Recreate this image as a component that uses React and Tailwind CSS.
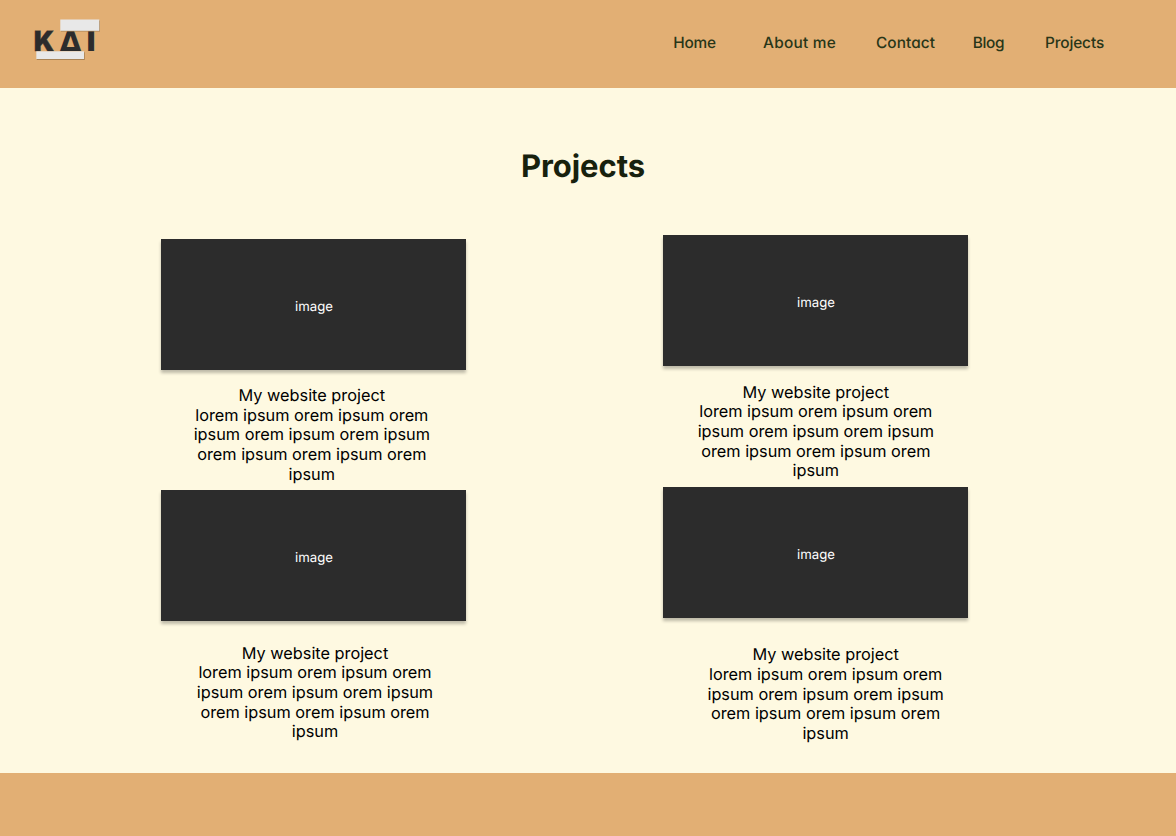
import React from "react";

const links = [
  { label: "Home", box: "w-[44px] ml-[672.5px]", spacing: "tracking-[-0.2px]" },
  { label: "About me", box: "w-[74px] ml-[46px]", spacing: "tracking-[0.25px]" },
  { label: "Contact", box: "w-[60px] ml-[39px]", spacing: "tracking-[0.05px]" },
  { label: "Blog", box: "w-[32px] ml-[37px]", spacing: "tracking-[-0.3px]" },
  { label: "Projects", box: "w-[60px] ml-[40px]", spacing: "tracking-[-0.1px]" },
];

function Logo() {
  return (
    <svg
      className="absolute left-[30px] top-[14px] h-[50px] w-[76px]"
      viewBox="30 14 76 50"
      role="img"
      aria-label="KAT"
    >
      <g fill="#2c2c2c" fontFamily="Inter, sans-serif" fontWeight="900" fontSize="28">
        <text x="33.8" y="51.3" textLength="20.5" lengthAdjust="spacingAndGlyphs" stroke="#2c2c2c" strokeWidth="0.4">K</text>
        <text x="59.3" y="51" fontWeight="800" textLength="22.5" lengthAdjust="spacingAndGlyphs">Δ</text>
        <text x="86.7" y="51" textLength="8.6" lengthAdjust="spacingAndGlyphs">I</text>
      </g>
      <rect x="61" y="20.5" width="39" height="11" fill="#a98355" />
      <rect x="60.3" y="19.5" width="39" height="11.3" fill="#e8e8e8" />
      <rect x="36.8" y="52.3" width="48" height="7.7" fill="#a98355" />
      <rect x="36.3" y="51.3" width="47.7" height="7.7" fill="#e8e8e8" />
    </svg>
  );
}

function Project({ gap, shift, caption }) {
  return (
    <article className="flex w-[305px] flex-col">
      <div className={`${caption} flex h-[131px] items-center justify-center bg-[#2c2c2c] pl-[1px] text-[13.2px] text-white shadow-[0_3px_3px_rgba(0,0,0,0.25)]`}>
        image
      </div>
      <div className={`${gap} ${shift} w-[244px] text-center text-[16.3px] leading-[19.7px] text-black`}>
        <h2>My website project</h2>
        <p>lorem ipsum orem ipsum orem ipsum orem ipsum orem ipsum orem ipsum orem ipsum orem ipsum</p>
      </div>
    </article>
  );
}

export default function App() {
  return (
    <div className="flex h-[836px] w-[1176px] flex-col overflow-hidden bg-[#fef9e1] font-['Inter',sans-serif] [text-rendering:geometricPrecision]">
      <header className="relative h-[88px] shrink-0 bg-[#e2af74]">
        <Logo />
        <nav className="flex h-[86px] items-center text-[15.4px] font-medium text-[#283618] [font-feature-settings:'cv11']">
          {links.map((link) => (
            <a key={link.label} href="#" className={`${link.box} ${link.spacing} flex justify-center whitespace-nowrap`}>
              {link.label}
            </a>
          ))}
        </nav>
      </header>
      <main className="flex h-[685px] shrink-0 flex-col">
        <h1 className="flex h-[147px] items-center justify-center pt-[11px] pr-[10px] text-[31px] font-bold tracking-[-0.05px] text-[#17210d]">
          Projects
        </h1>
        <div className="flex gap-[197px] pl-[161px]">
          <section className="flex flex-col gap-[5.5px] pt-[4px]">
            <Project gap="mt-[16px]" shift="ml-[28.8px]" caption="pt-[7px]" />
            <Project gap="mt-[22.5px]" shift="ml-[32px]" caption="pt-[7px]" />
          </section>
          <section className="flex flex-col gap-[5.5px]">
            <Project gap="mt-[16.5px]" shift="ml-[30.8px]" caption="pt-[7px]" />
            <Project gap="mt-[27.8px]" shift="ml-[40.6px]" caption="pt-[8px]" />
          </section>
        </div>
      </main>
      <footer className="h-[63px] shrink-0 bg-[#e2af74]" />
    </div>
  );
}
